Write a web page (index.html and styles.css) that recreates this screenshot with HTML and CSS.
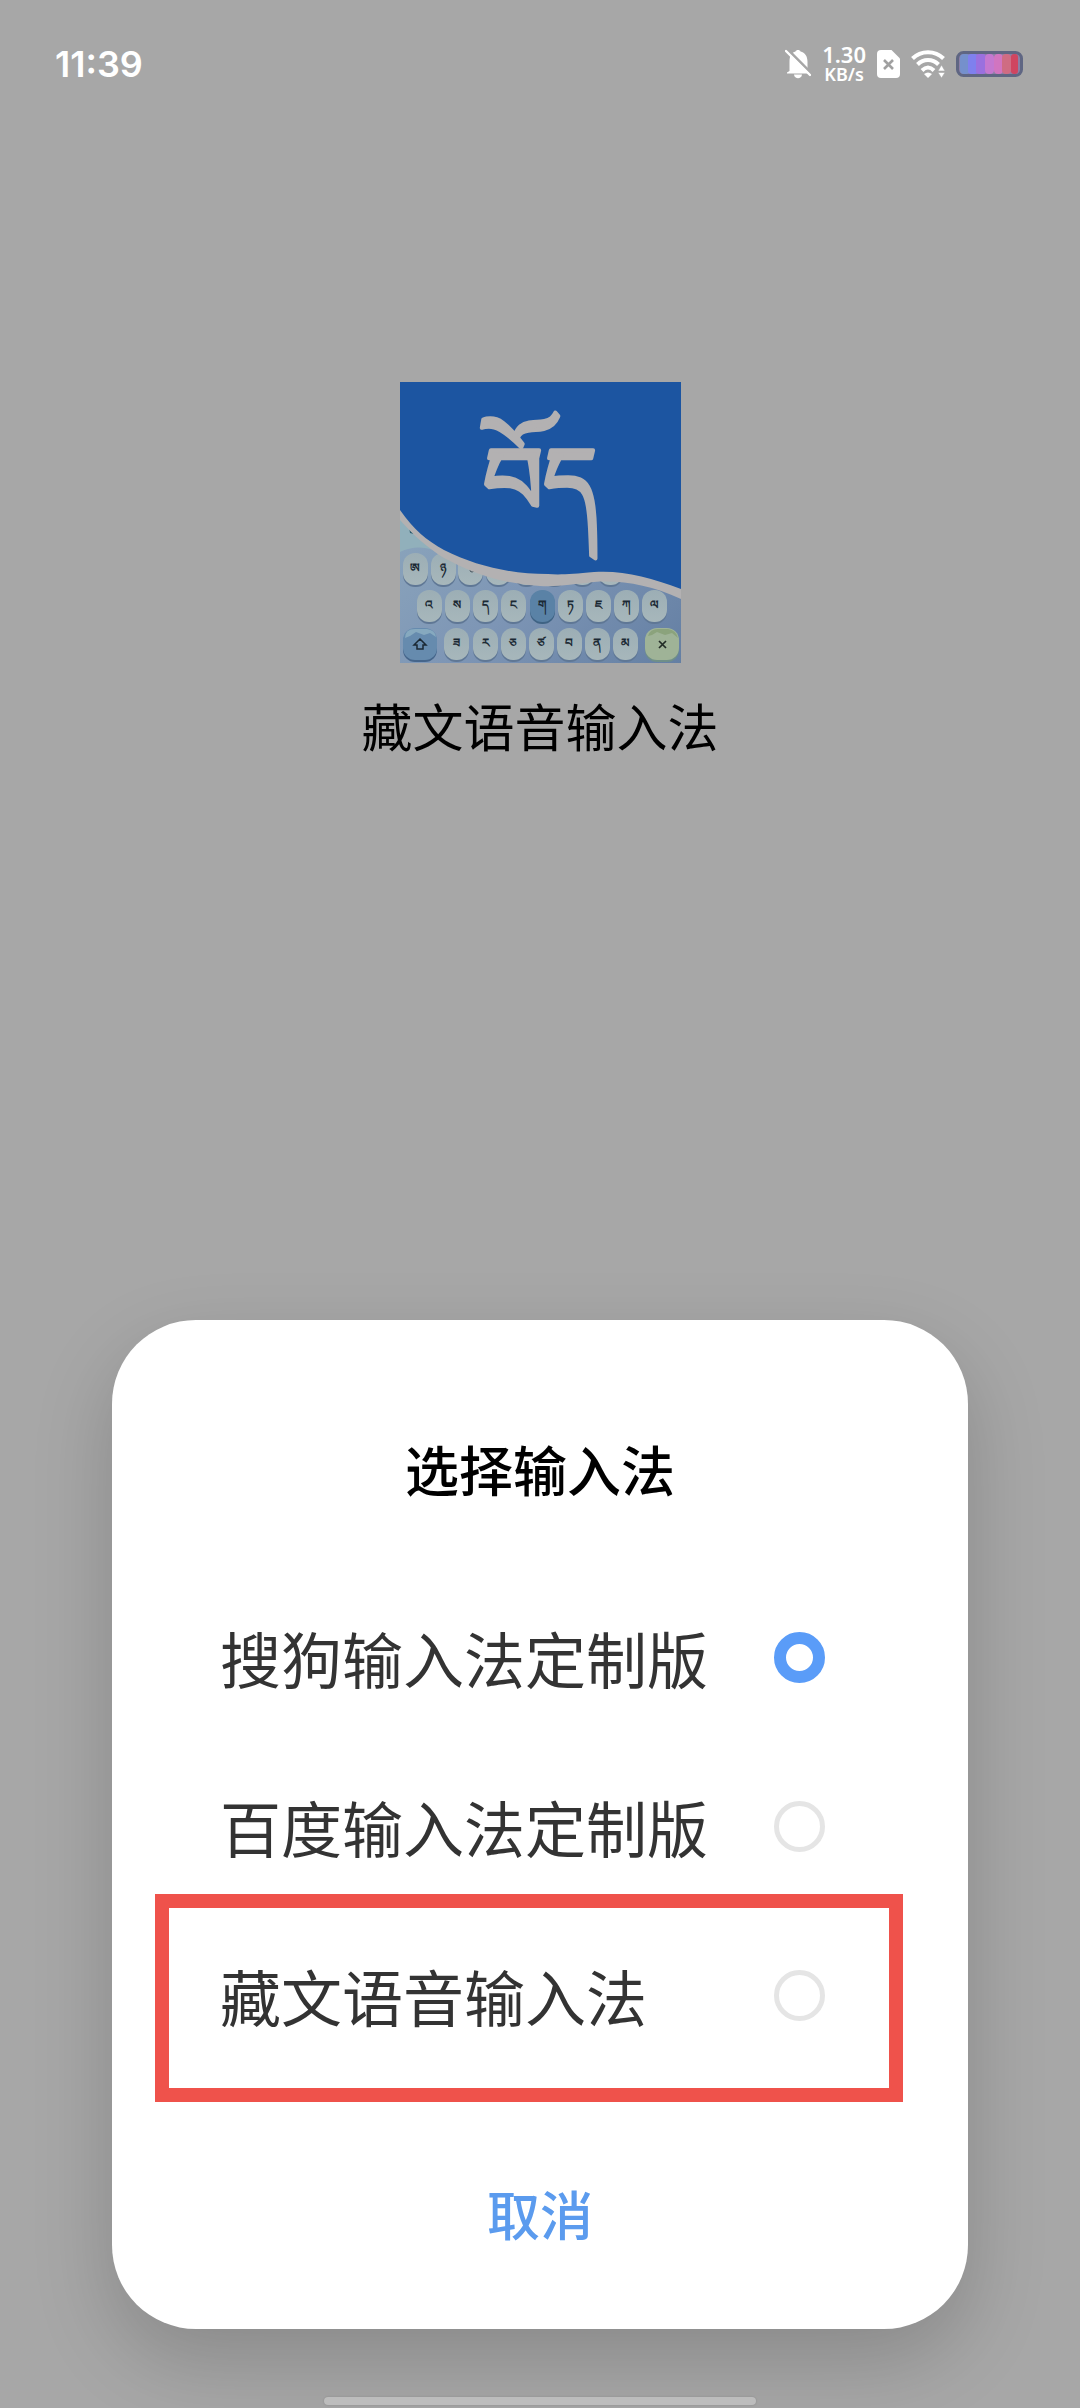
FILE: index.html
```html
<!DOCTYPE html>
<html lang="zh-CN">
<head>
    <meta charset="UTF-8">
    <meta name="viewport" content="width=device-width, initial-scale=1.0">
    <title>藏文语音输入法</title>
    <link rel="stylesheet" href="styles.css">
</head>
<body>
    <header class="status-bar">
        <span class="time">11:39</span>
        <div class="status-icons">
            <!-- Silent -->
            <svg width="26" height="30" viewBox="0 0 26 30">
                <path d="M4.500 22V13C4.500 6 7 3.500 10.500 2.500C11 .5 15 .5 15.500 2.500C20 3.500 22.500 7 22.500 13V19L25 23.500V24.500H2V23.500Z" fill="#fff"/>
                <path d="M9 25.500H17C16.500 30.500 9.500 30.500 9 25.500Z" fill="#fff"/>
                <path d="M2.500 .5L26 24" stroke="#a7a7a7" stroke-width="3" fill="none"/>
                <path d="M1 2L25 26" stroke="#fff" stroke-width="2.400" stroke-linecap="round"/>
            </svg>
            <div class="speed">
                <span class="speed-value">1.30</span>
                <span class="speed-unit">KB/s</span>
            </div>
            <!-- No SIM -->
            <svg width="23" height="28" viewBox="0 0 23 28">
                <path d="M4 0H14.500L23 8.500V24Q23 28 19 28H4Q0 28 0 24V4Q0 0 4 0Z" fill="#fff"/>
                <path d="M7 10L16 19M16 10L7 19" stroke="#a0a0a0" stroke-width="2.600"/>
            </svg>
            <!-- Wi-Fi -->
            <svg width="34" height="28" viewBox="0 0 34 28">
                <g fill="none" stroke="#fff" stroke-width="4">
                    <path d="M1.500 8.500C10 0 24 0 32.500 8.500"/>
                    <path d="M6.500 14.500C12.500 8.500 21.500 8.500 27.500 14.500"/>
                    <path d="M11 20.500C15 16.500 19 16.500 23 20.500"/>
                </g>
                <path d="M13 24Q17 21 21 24L17 28Z" fill="#fff"/>
                <path d="M27 21L30.500 15L34 21ZM27 22.500H34L30.500 28Z" fill="#fff" stroke="#a7a7a7" stroke-width=".6"/>
            </svg>
            <!-- Battery -->
            <svg width="67" height="26" viewBox="0 0 67 26">
                <rect x="1.500" y="1.500" width="64" height="23" rx="6" fill="#8a7fa5" stroke="#5f6683" stroke-width="3"/>
                <rect x="4" y="3" width="10" height="20" rx="4" fill="#7590cc"/>
                <rect x="12" y="3" width="10" height="20" rx="3" fill="#7f80ee"/>
                <rect x="20" y="3" width="10" height="20" rx="3" fill="#9a70df"/>
                <rect x="29" y="3" width="9" height="20" rx="4" fill="#c478d0"/>
                <rect x="38" y="3" width="9" height="20" rx="4" fill="#d175c0"/>
                <rect x="46" y="3" width="9" height="20" rx="4" fill="#cf6c83"/>
                <rect x="55" y="3" width="7" height="20" rx="3" fill="#cf4560"/>
            </svg>
        </div>
    </header>

    <main class="app">
        <svg class="app-icon" viewBox="0 0 281 281">
            <defs>
                <linearGradient id="board" x1="0" y1="0" x2="1" y2="1">
                    <stop offset="0" stop-color="#94afc0"/>
                    <stop offset=".6" stop-color="#7d95b5"/>
                    <stop offset="1" stop-color="#647fa3"/>
                </linearGradient>
                <linearGradient id="cap" x1="0" y1="0" x2="0" y2="1">
                    <stop offset="0" stop-color="#9caeb5"/>
                    <stop offset="1" stop-color="#a7b7bb"/>
                </linearGradient>
                <g id="key">
                    <rect x="0" y="2" width="25" height="32" rx="12" fill="#5f7795"/>
                    <rect width="25" height="32" rx="12" fill="url(#cap)"/>
                </g>
            </defs>
            <rect width="281" height="281" fill="url(#board)"/>
            <path d="M0 128V170Q20 160 44 172V150Z" fill="#91b0bb"/>
            <path d="M9 145L17 149V151H14V152L10 151Z" fill="#26576a"/>
            <use href="#key" x="3" y="171"/>
            <use href="#key" x="31" y="171"/>
            <use href="#key" x="58" y="171"/>
            <use href="#key" x="86" y="171"/>
            <use href="#key" x="114" y="171"/>
            <use href="#key" x="142" y="171"/>
            <use href="#key" x="170" y="171"/>
            <use href="#key" x="198" y="171"/>
            <use href="#key" x="17" y="208"/>
            <use href="#key" x="45" y="208"/>
            <use href="#key" x="73" y="208"/>
            <use href="#key" x="101" y="208"/>
            <rect x="130" y="210" width="25" height="32" rx="12" fill="#3f6384"/>
            <rect x="130" y="208" width="25" height="32" rx="12" fill="#5a82a6"/>
            <use href="#key" x="158" y="208"/>
            <use href="#key" x="186" y="208"/>
            <use href="#key" x="214" y="208"/>
            <use href="#key" x="242" y="208"/>
            <rect x="3" y="248" width="34" height="32" rx="12" fill="#45658b"/>
            <rect x="3" y="246" width="34" height="32" rx="12" fill="#668bae"/>
            <path d="M5 256Q5 247 15 247H27Q35 248 36 255L30 251L24 253L16 250L10 254Z" fill="#86a9bf"/>
            <use href="#key" x="44" y="246"/>
            <use href="#key" x="73" y="246"/>
            <use href="#key" x="101" y="246"/>
            <use href="#key" x="129" y="246"/>
            <use href="#key" x="157" y="246"/>
            <use href="#key" x="185" y="246"/>
            <use href="#key" x="213" y="246"/>
            <rect x="245" y="248" width="34" height="32" rx="12" fill="#6f8f88"/>
            <rect x="245" y="246" width="34" height="32" rx="12" fill="#9fb397"/>
            <path d="M248 254Q250 247 258 247H268Q276 248 278 256L272 251L265 253L257 250L252 253Z" fill="#8ba37c"/>
            <path d="M20 257L26 263H23V267H17V263H14Z" fill="none" stroke="#1b2934" stroke-width="1.500"/>
            <path d="M259 259L266 266M266 259L259 266" stroke="#222c26" stroke-width="1.700"/>
            <g class="key-text">
                <text x="15" y="190">ཨ</text>
                <text x="43" y="190">ཉ</text>
                <text x="29" y="227">འ</text>
                <text x="57" y="227">ས</text>
                <text x="85" y="227">ད</text>
                <text x="113" y="227">ང</text>
                <text x="142" y="227">ག</text>
                <text x="170" y="227">ཏ</text>
                <text x="198" y="227">ཇ</text>
                <text x="226" y="227">ཀ</text>
                <text x="254" y="227">ལ</text>
                <text x="56" y="265">ཟ</text>
                <text x="85" y="265">ར</text>
                <text x="113" y="265">ཅ</text>
                <text x="141" y="265">ཙ</text>
                <text x="169" y="265">བ</text>
                <text x="197" y="265">ན</text>
                <text x="225" y="265">མ</text>
            </g>
            <circle cx="72" cy="188" r="2" fill="none" stroke="#3f4d56"/>
            <path d="M0 0H281V217C250 203 222 198 194 200C172 202 160 205 140 204C90 201 60 184 44 176C28 166 14 154 0 138Z" fill="#b3b1b2"/>
            <path d="M0 0H281V207C250 195 222 188 194 190C172 192 160 193 148 192C110 192 76 184 44 168C26 158 14 148 0 128Z" fill="#1c55a1"/>
            <text class="logo-text" x="140" y="132">བོད</text>
        </svg>
        <h1 class="app-name">藏文语音输入法</h1>
    </main>

    <div class="overlay">
        <form class="dialog" role="dialog" aria-labelledby="dialog-title">
            <h2 class="dialog-title" id="dialog-title">选择输入法</h2>
            <div class="options">
                <label class="option">
                    <span>搜狗输入法定制版</span>
                    <input type="radio" name="ime" value="sogou" checked>
                </label>
                <label class="option">
                    <span>百度输入法定制版</span>
                    <input type="radio" name="ime" value="baidu">
                </label>
                <label class="option highlight">
                    <span>藏文语音输入法</span>
                    <input type="radio" name="ime" value="tibetan">
                </label>
            </div>
            <button class="cancel-button" type="button">取消</button>
        </form>
        <div class="home-bar"></div>
    </div>
</body>
</html>
```

FILE: styles.css
```css
*, *:before, *:after {
    box-sizing: border-box;
}
body {
    margin: 0;
    min-height: 100vh;
    position: relative;
    background-color: #a7a7a7;
    color: #000;
    font-family: "Noto Sans CJK SC", sans-serif;
}

/* Status bar */
.status-bar {
    display: flex;
    justify-content: space-between;
    align-items: center;
    height: 128px;
    padding: 0 57px 0 55px;
    color: #fff;
}

.time {
    font-family: Inter, sans-serif;
    font-size: 36px;
    font-weight: 600;
}

.status-icons {
    display: flex;
    align-items: center;
    gap: 11px;
}

.speed {
    display: flex;
    flex-direction: column;
    align-items: center;
    font-family: "Noto Sans", sans-serif;
    font-weight: 600;
    line-height: 20px;
}

.speed-value {
    font-size: 22px;
}

.speed-unit {
    font-size: 18px;
}

/* App */
.app {
    display: flex;
    flex-direction: column;
    align-items: center;
    padding-top: 254px;
}

.app-icon {
    width: 281px;
    height: 281px;
}

.key-text {
    font-size: 12px;
    font-weight: bold;
    text-anchor: middle;
    fill: #1b2934;
}

.logo-text {
    font-size: 94px;
    text-anchor: middle;
    fill: #b3b1b2;
    stroke: #b3b1b2;
    stroke-width: 4px;
    stroke-linejoin: round;
}

.app-name {
    margin: 22px 0 0;
    font-size: 51px;
    font-weight: 400;
    line-height: 80px;
}

/* Dialog */
.overlay {
    position: absolute;
    inset: 0;
    display: flex;
    flex-direction: column;
    justify-content: flex-end;
    align-items: center;
    padding: 0 112px 3px;
}

.dialog {
    width: 100%;
    padding: 109px 0 76px;
    border-radius: 84px;
    background-color: #fff;
    box-shadow: 0 30px 80px rgba(0, 0, 0, 0.18);
    text-align: center;
}

.dialog-title {
    margin: 0 0 64px;
    font-size: 54px;
    font-weight: 500;
    line-height: 80px;
}

.option {
    display: flex;
    justify-content: space-between;
    align-items: center;
    height: 169px;
    padding: 0 143px 0 108px;
    position: relative;
    color: #333;
    font-size: 61px;
}

.option input {
    appearance: none;
    width: 51px;
    height: 51px;
    margin: 0;
    border: 5px solid #e5e5e5;
    border-radius: 50%;
}

.option input:checked {
    border: 12px solid #5a9cf8;
}

/* Red frame around the option to pick */
.highlight:after {
    content: "";
    position: absolute;
    inset: -17px 65px -22px 43px;
    border: 14px solid #ef524b;
    pointer-events: none;
}

.cancel-button {
    margin-top: 93px;
    padding: 0 40px;
    border: none;
    background: none;
    color: #5b9bee;
    font-family: inherit;
    font-size: 53px;
    font-weight: 500;
    line-height: 80px;
    cursor: pointer;
}

.home-bar {
    width: 432px;
    height: 8px;
    margin-top: 68px;
    border-radius: 4px;
    background-color: #bdbdbd;
    box-shadow: 0 0 2px #888;
}
```
